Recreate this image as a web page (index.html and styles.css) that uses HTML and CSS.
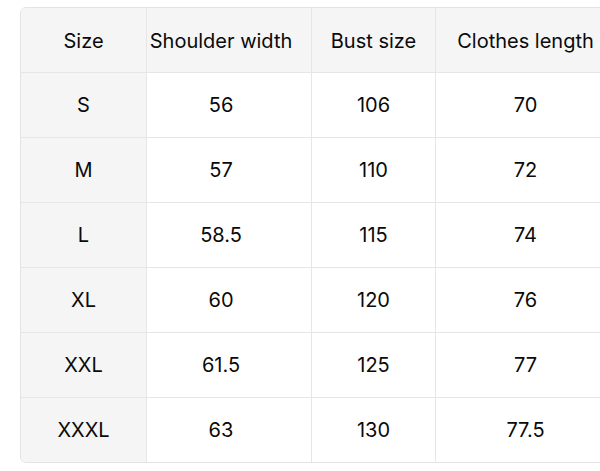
FILE: index.html
```html
<!DOCTYPE html>
<html>
<head>
<meta charset="utf-8">
<link rel="stylesheet" href="styles.css">
</head>
<body>
<div class="wrap">
<table class="size-table">
  <colgroup>
    <col class="c1"><col class="c2"><col class="c3"><col class="c4">
  </colgroup>
  <thead>
    <tr><th>Size</th><th class="mid">Shoulder width</th><th>Bust size</th><th>Clothes length</th></tr>
  </thead>
  <tbody>
    <tr><th>S</th><td class="mid">56</td><td>106</td><td>70</td></tr>
    <tr><th>M</th><td class="mid">57</td><td>110</td><td>72</td></tr>
    <tr><th>L</th><td class="mid">58.5</td><td>115</td><td>74</td></tr>
    <tr><th>XL</th><td class="mid">60</td><td>120</td><td>76</td></tr>
    <tr><th>XXL</th><td class="mid">61.5</td><td>125</td><td>77</td></tr>
    <tr><th>XXXL</th><td class="mid">63</td><td>130</td><td>77.5</td></tr>
  </tbody>
</table>
</div>
</body>
</html>
```

FILE: styles.css
```css
html, body {
  margin: 0;
  padding: 0;
  background: #ffffff;
  overflow: hidden;
}
.wrap {
  padding: 7px 0 0 20px;
  width: 700px;
}
.size-table {
  border-collapse: separate;
  border-spacing: 0;
  border: 1px solid #e3e3e3;
  border-radius: 6px;
  table-layout: fixed;
  width: 594px;
  font-family: Inter, "Liberation Sans", sans-serif;
  font-size: 20px;
  color: #0a0a0a;
  overflow: hidden;
}
.c1 { width: 126px; }
.c2 { width: 165px; }
.c3 { width: 124px; }
.c4 { width: 179px; }
.size-table th,
.size-table td {
  height: 64px;
  padding: 0;
  text-align: center;
  vertical-align: middle;
  font-weight: 400;
  white-space: nowrap;
  border-right: 1px solid #e6e6e6;
  border-bottom: 1px solid #e6e6e6;
}
.size-table .mid { padding-right: 16px; }
.size-table tr > *:last-child { border-right: none; }
.size-table tbody tr:last-child > * { border-bottom: none; }
.size-table thead th {
  background: #f5f5f5;
  padding-top: 2px;
  height: 62px;
}
.size-table tbody th {
  background: #f5f5f5;
}
.size-table td {
  background: #ffffff;
}
```
